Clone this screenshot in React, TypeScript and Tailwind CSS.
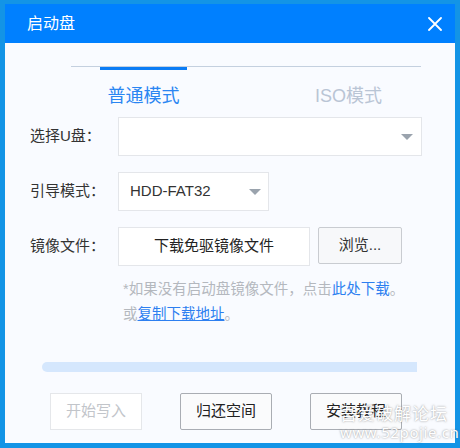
import React from 'react';

const font = { fontFamily: '"Liberation Sans", "Noto Sans CJK SC", sans-serif' };

const Arrow: React.FC = () => (
  <svg width="12" height="6" viewBox="0 0 12 6" className="shrink-0">
    <path d="M0 0 L12 0 L6 6 Z" fill="#9aa3ad" />
  </svg>
);

const App: React.FC = () => {
  return (
    <div className="relative w-[460px] h-[448px] overflow-hidden bg-[#1394e6] pt-[4px] px-[5px]" style={font}>
      <div className="h-[439px] flex flex-col bg-[#f9fbff]">
        {/* title bar */}
        <div className="h-[39px] shrink-0 bg-[#0080ff] flex items-center justify-between pl-[22px] pr-[13px]">
          <span className="text-white text-[16px] leading-none">启动盘</span>
          <svg width="14" height="14" viewBox="0 0 14 14">
            <path d="M1 1 L13 13 M13 1 L1 13" stroke="#fff" strokeWidth="1.8" strokeLinecap="round" />
          </svg>
        </div>

        <div className="flex-1 pl-[25px]">
          {/* tabs */}
          <div className="ml-[41px] w-[350px] mt-[23px]">
            <div className="h-px bg-[#c4d0df]" />
            <div className="flex">
              <div className="ml-[29px] w-[87px] flex flex-col">
                <div className="h-[3px] bg-[#0a7cf5]" />
                <span className="mt-[13px] leading-[26px] text-[18px] text-center text-[#2a86f2]">普通模式</span>
              </div>
              <div className="ml-[118px] w-[87px] flex flex-col">
                <div className="h-[3px]" />
                <span className="mt-[13px] leading-[26px] text-[18px] text-center text-[#b9c5d5]">ISO模式</span>
              </div>
            </div>
          </div>

          {/* select U disk */}
          <div className="flex items-center mt-[8px]">
            <span className="w-[88px] text-[15px] text-[#333]">选择U盘：</span>
            <div className="w-[304px] h-[39px] bg-white border border-[#e4e6ea] flex items-center justify-end pr-[8px]">
              <Arrow />
            </div>
          </div>

          {/* boot mode */}
          <div className="flex items-center mt-[16px]">
            <span className="w-[88px] text-[15px] text-[#333]">引导模式：</span>
            <div className="w-[151px] h-[39px] bg-white border border-[#e4e6ea] flex items-center justify-between pl-[11px] pr-[7px]">
              <span className="text-[15px] text-[#333]">HDD-FAT32</span>
              <Arrow />
            </div>
          </div>

          {/* image file */}
          <div className="flex items-start mt-[16px]">
            <span className="w-[88px] h-[39px] flex items-center text-[15px] text-[#333]">镜像文件：</span>
            <button className="w-[192px] h-[39px] bg-white border border-[#e4e6ea] text-[15px] text-[#222]">
              下载免驱镜像文件
            </button>
            <button className="ml-[8px] w-[84px] h-[37px] bg-[#f7f8fa] border border-[#c9ccd1] rounded-[2px] text-[15px] text-[#333]">
              浏览...
            </button>
          </div>

          {/* note */}
          <div className="ml-[93px] mt-[11px] text-[14.5px] leading-[25px] text-[#b4b8be]">
            <div>
              *如果没有启动盘镜像文件，点击<span className="text-[#2d7ff0]">此处下载</span>。
            </div>
            <div>
              或<span className="text-[#2d7ff0] underline">复制下载地址</span>。
            </div>
          </div>

          {/* progress */}
          <div className="ml-[12px] mt-[35px] w-[375px] h-[10px] bg-[#d5e7fd] rounded-l-full" />

          {/* buttons */}
          <div className="flex ml-[20px] mt-[21px] gap-[38px]">
            <button className="w-[92px] h-[37px] bg-white border border-[#e5e7ea] text-[15px] text-[#c2c5ca]">
              开始写入
            </button>
            <button className="w-[92px] h-[37px] bg-[#fafbfc] border border-[#a9adb3] rounded-[2px] text-[15px] text-[#222]">
              归还空间
            </button>
            <button className="w-[92px] h-[37px] bg-[#fafbfc] border border-[#a9adb3] rounded-[2px] text-[15px] text-[#222]">
              安装教程
            </button>
          </div>
        </div>
      </div>

      {/* watermark */}
      <div
        className="absolute left-[340px] top-[402px] flex flex-col text-white pointer-events-none"
        style={{ textShadow: '0 0 2px rgba(90,90,90,0.7)' }}
      >
        <span className="text-[17px] leading-[21px] tracking-[1px]" style={{ fontFamily: '"Noto Sans CJK SC", sans-serif' }}>吾爱破解论坛</span>
        <span className="text-[15px] leading-[19px] tracking-[0.6px]" style={{ fontFamily: '"Noto Sans", sans-serif' }}>www.52pojie.cn</span>
      </div>
    </div>
  );
};

export default App;
